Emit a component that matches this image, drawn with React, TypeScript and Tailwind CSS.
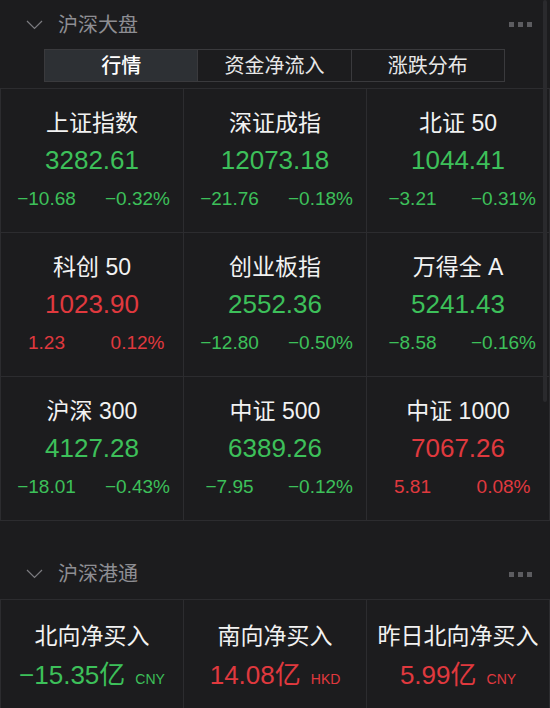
import React from "react";

const GREEN = "text-[#3dc05a]";
const RED = "text-[#e0393e]";

type Idx = { name: string; value: string; chg: string; pct: string; up: boolean };

const indices: Idx[] = [
  { name: "上证指数", value: "3282.61", chg: "−10.68", pct: "−0.32%", up: false },
  { name: "深证成指", value: "12073.18", chg: "−21.76", pct: "−0.18%", up: false },
  { name: "北证 50", value: "1044.41", chg: "−3.21", pct: "−0.31%", up: false },
  { name: "科创 50", value: "1023.90", chg: "1.23", pct: "0.12%", up: true },
  { name: "创业板指", value: "2552.36", chg: "−12.80", pct: "−0.50%", up: false },
  { name: "万得全 A", value: "5241.43", chg: "−8.58", pct: "−0.16%", up: false },
  { name: "沪深 300", value: "4127.28", chg: "−18.01", pct: "−0.43%", up: false },
  { name: "中证 500", value: "6389.26", chg: "−7.95", pct: "−0.12%", up: false },
  { name: "中证 1000", value: "7067.26", chg: "5.81", pct: "0.08%", up: true },
];

const flows = [
  { name: "北向净买入", value: "−15.35", unit: "CNY", up: false },
  { name: "南向净买入", value: "14.08", unit: "HKD", up: true },
  { name: "昨日北向净买入", value: "5.99", unit: "CNY", up: true },
];

function Chevron() {
  return (
    <svg width="17" height="10" viewBox="0 0 17 10" fill="none">
      <path d="M1 1 L8.5 8.5 L16 1" stroke="#7c7c80" strokeWidth="1.2" />
    </svg>
  );
}

function Dots() {
  return (
    <div className="flex gap-[4px]">
      <div className="w-[5px] h-[5px] bg-[#5c5c60]" />
      <div className="w-[5px] h-[5px] bg-[#5c5c60]" />
      <div className="w-[5px] h-[5px] bg-[#5c5c60]" />
    </div>
  );
}

function SectionHeader({ title }: { title: string }) {
  return (
    <div className="flex items-center justify-between h-full pl-[26px] pr-[18px]">
      <div className="flex items-center gap-[15px]">
        <Chevron />
        <span className="text-[20px] leading-[26px] text-[#8e8e93]">{title}</span>
      </div>
      <Dots />
    </div>
  );
}

export default function App() {
  return (
    <div
      className="relative w-[550px] h-[708px] overflow-hidden bg-[#1c1c1e]"
      style={{ fontFamily: '"Liberation Sans", "Noto Sans CJK SC", sans-serif' }}
    >
      <div className="h-[49px]">
        <SectionHeader title="沪深大盘" />
      </div>

      <div className="ml-[44px] w-[461px] h-[33px] flex border border-[#3a3a3d]">
        <div className="flex-1 flex items-center justify-center bg-[#2d3034] text-[20px] text-white font-medium">
          行情
        </div>
        <div className="flex-1 flex items-center justify-center border-l border-[#3a3a3d] text-[20px] text-[#e8e8e8]">
          资金净流入
        </div>
        <div className="flex-1 flex items-center justify-center border-l border-[#3a3a3d] text-[20px] text-[#e8e8e8]">
          涨跌分布
        </div>
      </div>

      <div className="mt-[6px] grid grid-cols-3 gap-px bg-[#2c2c2f] border border-[#2c2c2f]">
        {indices.map((it) => {
          const c = it.up ? RED : GREEN;
          return (
            <div key={it.name} className="h-[143px] bg-[#1c1c1e] flex flex-col items-center pt-[19px]">
              <div className="text-[23px] leading-[30px] text-[#f2f2f2]">{it.name}</div>
              <div className={`mt-[7px] text-[26px] leading-[30px] ${c}`}>{it.value}</div>
              <div className={`mt-[13px] w-full grid grid-cols-2 text-center text-[19px] leading-[22px] ${c}`}>
                <span>{it.chg}</span>
                <span>{it.pct}</span>
              </div>
            </div>
          );
        })}
      </div>

      <div className="h-[78px] pt-[28px]">
        <SectionHeader title="沪深港通" />
      </div>

      <div className="grid grid-cols-3 gap-px bg-[#2c2c2f] border border-[#2c2c2f]">
        {flows.map((f) => {
          const c = f.up ? RED : GREEN;
          return (
            <div key={f.name} className="h-[142px] bg-[#1c1c1e] flex flex-col items-center pt-[21px]">
              <div className="text-[23px] leading-[30px] text-[#f2f2f2] whitespace-nowrap">{f.name}</div>
              <div className={`mt-[9px] flex items-baseline ${c}`}>
                <span className="text-[26px] leading-[30px]">{f.value}亿</span>
                <span className="ml-[10px] text-[14px]">{f.unit}</span>
              </div>
            </div>
          );
        })}
      </div>

      <div className="absolute left-[543px] top-0 w-[4px] h-[402px] bg-[#2a2a2d] rounded-full" />
    </div>
  );
}
